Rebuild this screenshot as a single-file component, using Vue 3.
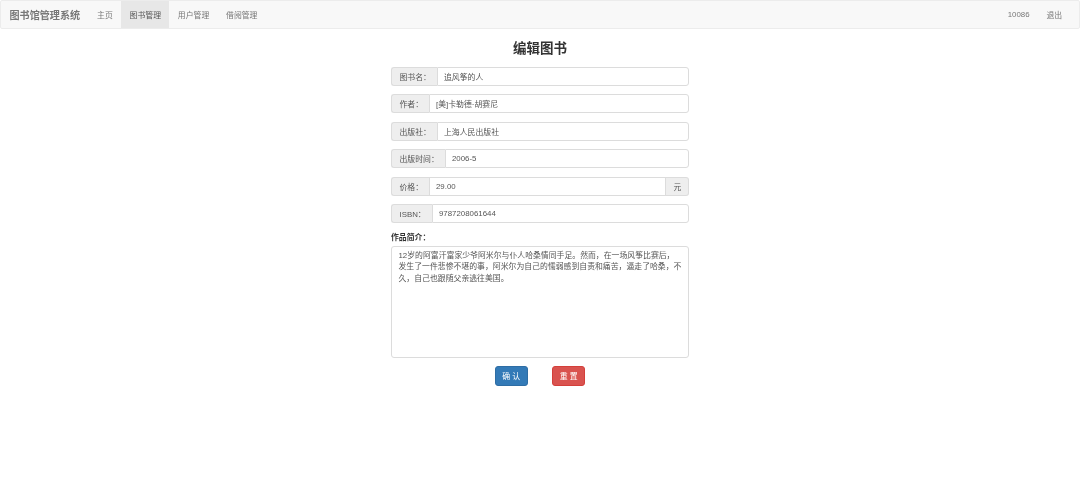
<script setup>
const fields = [
  { label: '图书名\uFF1A', value: '追风筝的人', width: '45.5px' },
  { label: '作者\uFF1A', value: '[美]卡勒德·胡赛尼', width: '37.5px' },
  { label: '出版社\uFF1A', value: '上海人民出版社', width: '45.5px' },
  { label: '出版时间\uFF1A', value: '2006-5', width: '53.5px' },
  { label: '价格\uFF1A', value: '29.00', width: '37.5px', addon: '元' },
  { label: 'ISBN\uFF1A', value: '9787208061644', width: '40.5px' },
]
const nav = ['主页', '图书管理', '用户管理', '借阅管理']
const introLabel = '作品简介\uFF1A'
const intro = '12岁的阿富汗富家少爷阿米尔与仆人哈桑情同手足。然而\uFF0C在一场风筝比赛后\uFF0C发生了一件悲惨不堪的事\uFF0C阿米尔为自己的懦弱感到自责和痛苦\uFF0C逼走了哈桑\uFF0C不久\uFF0C自己也跟随父亲逃往美国。'
</script>

<template>
  <div class="page">
    <nav class="navbar">
      <span class="brand">图书馆管理系统</span>
      <a v-for="(item, i) in nav" :key="item" class="nav-link" :class="{ active: i === 1 }">{{ item }}</a>
      <span class="spacer"></span>
      <a class="nav-link">10086</a>
      <a class="nav-link">退出</a>
    </nav>
    <h1 class="title">编辑图书</h1>
    <form class="form" @submit.prevent>
      <div v-for="f in fields" :key="f.label" class="group">
        <span class="addon label" :style="{ width: f.width }">{{ f.label }}</span>
        <span class="input">{{ f.value }}</span>
        <span v-if="f.addon" class="addon unit">{{ f.addon }}</span>
      </div>
      <div class="intro-label">{{ introLabel }}</div>
      <div class="textarea">{{ intro }}</div>
      <div class="actions">
        <button class="btn primary" type="button">确 认</button>
        <button class="btn danger" type="button">重 置</button>
      </div>
    </form>
  </div>
</template>

<style>
html, body { margin: 0; background: #fff; }
</style>

<style scoped>
.page {
  width: 1080px;
  height: 497px;
  overflow: hidden;
  background: #fff;
  color: #555;
  font-family: "Liberation Sans", "Noto Sans CJK SC", sans-serif;
  font-size: 7.875px;
  filter: blur(0.55px);
}
.navbar {
  display: flex;
  align-items: stretch;
  box-sizing: border-box;
  height: 29px;
  background: #f8f8f8;
  border: 1px solid #ececec;
  border-radius: 2px;
}
.brand {
  display: flex;
  align-items: center;
  padding: 0 8.5px;
  font-size: 10.1px;
  font-weight: 700;
  color: #777;
}
.nav-link {
  display: flex;
  align-items: center;
  padding: 0 8.4px;
  color: #777;
}
.nav-link.active {
  background: #e7e7e7;
  color: #555;
}
.spacer { flex: 1; }
.navbar > .nav-link:last-child { margin-right: 8.5px; }
.title {
  margin: 10.5px 0 0;
  height: 27px;
  line-height: 18px;
  text-align: center;
  font-size: 13.5px;
  font-weight: 700;
  color: #333;
}
.form {
  width: 298px;
  margin: 0 auto;
}
.group {
  display: flex;
  box-sizing: border-box;
  height: 19px;
  margin-bottom: 8.5px;
}
.addon {
  display: flex;
  align-items: center;
  box-sizing: border-box;
  padding: 0 0 0 7.5px;
  background: #eee;
  border: 1px solid #dcdcdc;
  color: #555;
  white-space: nowrap;
}
.label {
  flex: none;
  border-right: 0;
  border-radius: 3px 0 0 3px;
}
.unit {
  flex: none;
  width: 23px;
  border-left: 0;
  border-radius: 0 3px 3px 0;
}
.input {
  flex: 1;
  display: flex;
  align-items: center;
  box-sizing: border-box;
  padding: 0 6.5px;
  background: #fff;
  border: 1px solid #dcdcdc;
  border-radius: 0 3px 3px 0;
  color: #555;
  white-space: nowrap;
}
.group:has(.unit) .input { border-radius: 0; }
.intro-label {
  margin-top: 0.5px;
  height: 13px;
  line-height: 12px;
  font-weight: 700;
  color: #333;
}
.textarea {
  box-sizing: border-box;
  height: 112.5px;
  margin-top: 1px;
  padding: 3.5px 6.5px;
  background: #fff;
  border: 1px solid #dcdcdc;
  border-radius: 3px;
  line-height: 11.25px;
  color: #555;
}
.actions {
  display: flex;
  justify-content: center;
  gap: 24.5px;
  margin-top: 8px;
}
.btn {
  box-sizing: border-box;
  width: 33px;
  height: 19.5px;
  padding: 0;
  border: 1px solid;
  border-radius: 3px;
  font: inherit;
  color: #fff;
}
.primary { background: #337ab7; border-color: #2e6da4; }
.danger { background: #d9534f; border-color: #d43f3a; }
</style>
